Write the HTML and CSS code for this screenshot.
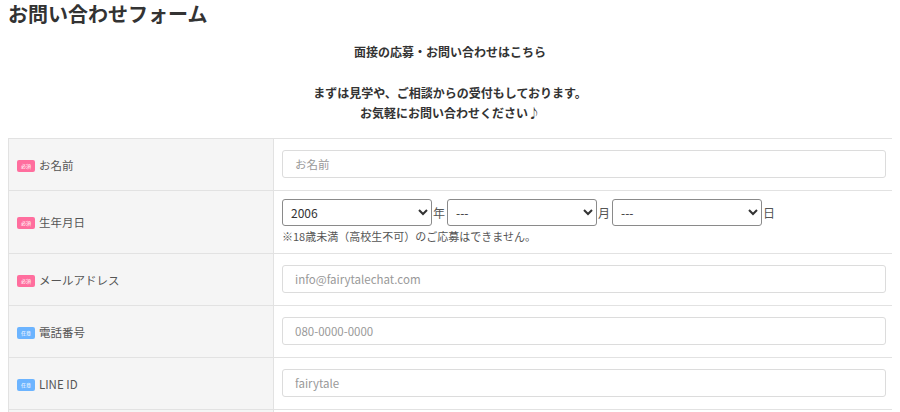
FILE: index.html
```html
<!DOCTYPE html>
<html lang="ja">
<head>
<meta charset="utf-8">
<link rel="stylesheet" href="styles.css">
</head>
<body>
<h1 class="title">お問い合わせフォーム</h1>
<div class="intro">
  <p>面接の応募・お問い合わせはこちら</p>
  <p class="blank">&nbsp;</p>
  <p>まずは見学や、ご相談からの受付もしております。</p>
  <p>お気軽にお問い合わせください♪</p>
</div>
<table class="form">
  <tr>
    <th><span class="badge req">必須</span>お名前</th>
    <td><input class="field" type="text" placeholder="お名前"></td>
  </tr>
  <tr class="birth">
    <th><span class="badge req">必須</span>生年月日</th>
    <td>
      <div class="dates">
        <select class="sel"><option>2006</option></select><span class="unit">年</span>
        <select class="sel"><option>---</option></select><span class="unit">月</span>
        <select class="sel"><option>---</option></select><span class="unit">日</span>
      </div>
      <p class="note">※18歳未満（高校生不可）のご応募はできません。</p>
    </td>
  </tr>
  <tr>
    <th><span class="badge req">必須</span>メールアドレス</th>
    <td><input class="field" type="text" placeholder="info@fairytalechat.com"></td>
  </tr>
  <tr>
    <th><span class="badge opt">任意</span>電話番号</th>
    <td><input class="field" type="text" placeholder="080-0000-0000"></td>
  </tr>
  <tr>
    <th><span class="badge opt">任意</span>LINE ID</th>
    <td><input class="field" type="text" placeholder="fairytale"></td>
  </tr>
  <tr class="message">
    <th></th>
    <td><textarea class="field area"></textarea></td>
  </tr>
</table>
</body>
</html>
```
FILE: styles.css
```css
html, body {
  background: #fff;
}
body {
  margin: 0 8px;
  padding-top: 4px;
  font-family: "Noto Sans CJK JP", "Noto Sans", sans-serif;
  color: #333;
  overflow: hidden;
}
.title {
  margin: 0;
  font-size: 20px;
  line-height: 20px;
  font-weight: 700;
  color: #333;
}
.intro {
  margin-top: 18px;
  text-align: center;
  font-size: 12px;
  font-weight: 700;
  line-height: 20.3px;
  color: #333;
}
.intro p {
  margin: 0;
}
.form {
  margin-top: 15px;
  width: calc(100% + 3px);
  border-collapse: collapse;
  border: 1px solid #e2e2e2;
}
.form th, .form td {
  border: 1px solid #e2e2e2;
  vertical-align: middle;
}
.form th {
  width: 248px;
  background: #f5f5f5;
  text-align: left;
  font-weight: 400;
  font-size: 11.5px;
  color: #555;
  padding: 0 8px;
  height: 50px;
}
.form td {
  padding: 11px 8px 12px 8px;
  background: #fff;
}
.badge {
  display: inline-block;
  width: 18px;
  height: 12px;
  line-height: 12px;
  border-radius: 2px;
  color: #fff;
  font-size: 5px;
  text-align: center;
  vertical-align: middle;
  margin-right: 4px;
  position: relative;
  top: -1px;
}
.req { background: #ff6e9e; }
.opt { background: #6cb4ff; }
.field {
  display: block;
  box-sizing: border-box;
  width: 100%;
  height: 28px;
  border: 1px solid #dcdcdc;
  border-radius: 3px;
  padding: 0 12px;
  font-family: "Noto Sans CJK JP", "Noto Sans", sans-serif;
  font-size: 11.5px;
  color: #333;
  background: #fff;
  outline: none;
}
.field::placeholder {
  color: #999;
}
.area {
  height: 160px;
  resize: none;
}
.birth td {
  padding: 7px 8px 8px 8px;
}
.birth th {
  height: 62px;
}
.dates {
  display: flex;
  align-items: center;
}
.sel {
  box-sizing: border-box;
  width: 150px;
  height: 27px;
  font-family: "Noto Sans CJK JP", "Noto Sans", sans-serif;
  font-size: 12px;
  color: #333;
  padding: 0 4px;
  background: #fff;
  border: 1px solid #8a8a8a;
  border-radius: 3px;
}
.unit {
  font-size: 12px;
  color: #555;
  width: 14px;
  padding-left: 1px;
}
.note {
  margin: 0;
  font-size: 11px;
  line-height: 18px;
  color: #555;
  padding-top: 1px;
}
```
